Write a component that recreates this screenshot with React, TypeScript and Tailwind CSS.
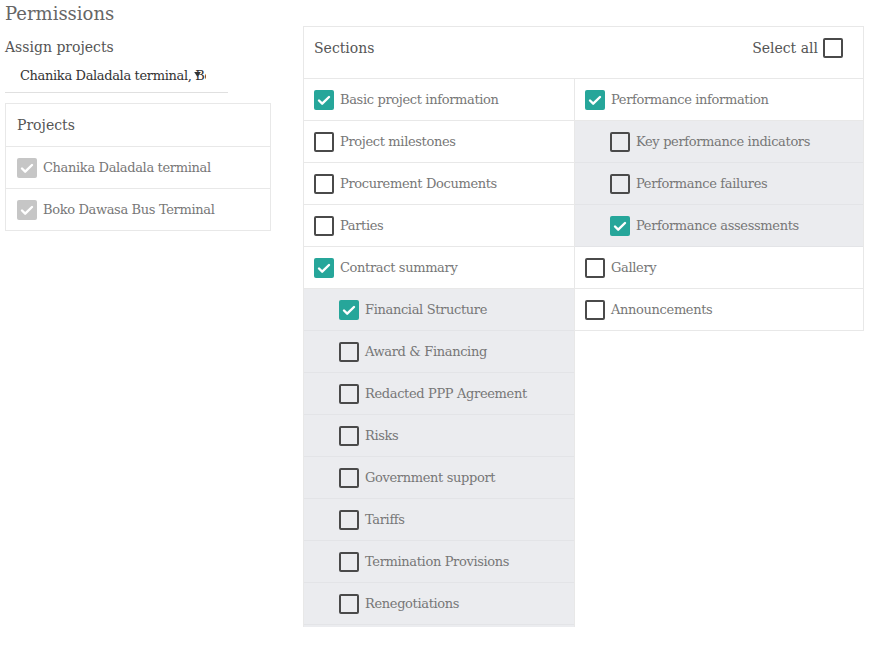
import { ReactNode } from "react";

const font = { fontFamily: '"DejaVu Serif", serif' };

function Box({ checked, muted }: { checked?: boolean; muted?: boolean }) {
	if (checked) {
		return (
			<span
				className={`flex h-5 w-5 shrink-0 items-center justify-center rounded-[2px] ${
					muted ? "bg-[#c6c6c6]" : "bg-[#26a69a]"
				}`}>
				<svg viewBox="0 0 20 20" className="h-5 w-5">
					<path
						d="M5 10.5l3.2 3.2L15 7"
						fill="none"
						stroke="white"
						strokeWidth="2.4"
						strokeLinecap="round"
						strokeLinejoin="round"
					/>
				</svg>
			</span>
		);
	}
	return (
		<span className="block h-5 w-5 shrink-0 rounded-[2px] border-2 border-[#4a4a4a]" />
	);
}

function Row({
	label,
	checked,
	sub,
}: {
	label: string;
	checked?: boolean;
	sub?: boolean;
}) {
	return (
		<div
			className={`flex h-[42px] items-center gap-[6px] border-b ${
				sub
					? "bg-[#ebecef] pl-[35px] border-[#e3e4e7]"
					: "bg-white pl-[10px] border-[#e8e8e8]"
			}`}>
			<Box checked={checked} />
			<span className="text-[13px] tracking-[-0.35px] text-[#777]">{label}</span>
		</div>
	);
}

function Column({ children, className }: { children: ReactNode; className: string }) {
	return <div className={`border-x border-[#e8e8e8] ${className}`}>{children}</div>;
}

export default function App() {
	return (
		<div className="flex bg-white min-h-[651px]" style={font}>
			<div className="ml-[5px] w-[266px] shrink-0">
				<div className="h-7 text-[18px] leading-7 text-[#666]">Permissions</div>
				<div className="mt-2 text-[14px] leading-[22px] text-[#555]">Assign projects</div>
				<div className="relative h-[35px] w-[223px] border-b border-[#e0e0e0]">
					<div className="ml-[15px] w-[186px] overflow-hidden whitespace-nowrap pt-px text-[13px] leading-[34px] tracking-[-0.35px] text-[#333]">
						Chanika Daladala terminal, Boko Dawasa Bus Terminal
					</div>
					<svg viewBox="0 0 8 6" className="absolute left-[189px] top-[14px] h-[5px] w-[7px]">
						<path d="M0 0h8L4 6z" fill="#333" />
					</svg>
				</div>
				<div className="mt-[10px] border border-[#e8e8e8]">
					<div className="flex h-[42px] items-center pl-[11px] text-[14px] text-[#555]">
						Projects
					</div>
					{["Chanika Daladala terminal", "Boko Dawasa Bus Terminal"].map((p) => (
						<div
							key={p}
							className="flex h-[42px] items-center gap-[6px] border-t border-[#e8e8e8] pl-[11px]">
							<Box checked muted />
							<span className="text-[13px] tracking-[-0.35px] text-[#777]">{p}</span>
						</div>
					))}
				</div>
			</div>

			<div className="ml-[32px] mt-[26px] w-[561px] shrink-0">
				<div className="flex h-[53px] items-start justify-between border border-[#e8e8e8] pl-[10px] pr-5 pt-[10px] leading-[22px]">
					<span className="text-[14px] text-[#555]">Sections</span>
					<span className="flex items-center gap-[5px] text-[14px] text-[#555]">
						Select all <Box />
					</span>
				</div>
				<div className="flex items-start">
					<Column className="w-[272px] bg-[#ebecef] pb-[2px]">
						<Row label="Basic project information" checked />
						<Row label="Project milestones" />
						<Row label="Procurement Documents" />
						<Row label="Parties" />
						<Row label="Contract summary" checked />
						<Row label="Financial Structure" checked sub />
						<Row label="Award & Financing" sub />
						<Row label="Redacted PPP Agreement" sub />
						<Row label="Risks" sub />
						<Row label="Government support" sub />
						<Row label="Tariffs" sub />
						<Row label="Termination Provisions" sub />
						<Row label="Renegotiations" sub />
					</Column>
					<Column className="-ml-px w-[290px]">
						<Row label="Performance information" checked />
						<Row label="Key performance indicators" sub />
						<Row label="Performance failures" sub />
						<Row label="Performance assessments" checked sub />
						<Row label="Gallery" />
						<Row label="Announcements" />
					</Column>
				</div>
			</div>
		</div>
	);
}
